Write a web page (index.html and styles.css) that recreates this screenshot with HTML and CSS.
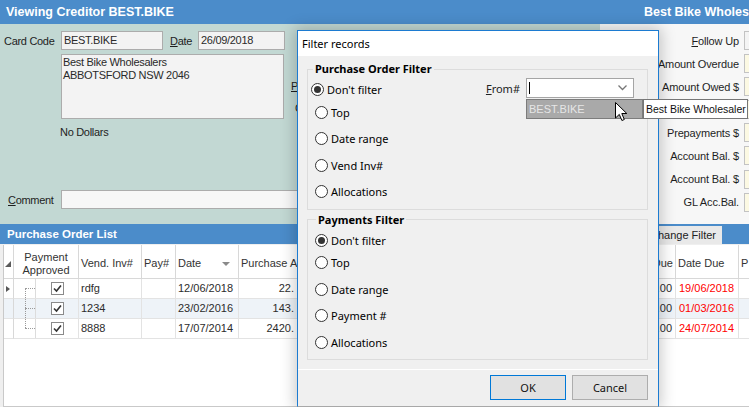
FILE: index.html
```html
<!DOCTYPE html>
<html>
<head>
<meta charset="utf-8">
<title>Viewing Creditor</title>
<link rel="stylesheet" href="styles.css">
</head>
<body>
<div class="app">
  <div class="titlebar">
    <span class="title">Viewing Creditor BEST.BIKE</span>
    <span class="title-right">Best Bike Wholesa</span>
  </div>
  <div class="main">
    <div class="form">
      <div class="row1">
        <span class="lbl lbl-code">Card Code</span>
        <span class="field f-code">BEST.BIKE</span>
        <span class="lbl lbl-date"><u>D</u>ate</span>
        <span class="field f-date">26/09/2018</span>
      </div>
      <div class="row2">
        <div class="address">Best Bike Wholesalers<br>ABBOTSFORD NSW 2046</div>
        <div class="side-labels">
          <span class="side-lbl"><u>P</u>h</span>
          <span class="side-lbl c2">C</span>
        </div>
      </div>
      <div class="currency">No Dollars</div>
      <div class="row-comment">
        <span class="lbl lbl-comment"><u>C</u>omment</span>
        <span class="field f-comment"></span>
      </div>
    </div>
    <div class="summary">
      <div class="srow"><span class="slbl"><u>F</u>ollow Up</span><span class="sfield plain"></span></div>
      <div class="srow"><span class="slbl">Amount Overdue</span><span class="sfield"></span></div>
      <div class="srow"><span class="slbl">Amount Owed $</span><span class="sfield"></span></div>
      <div class="srow"><span class="slbl"></span><span class="sfield"></span></div>
      <div class="srow"><span class="slbl">Prepayments $</span><span class="sfield"></span></div>
      <div class="srow"><span class="slbl">Account Bal. $</span><span class="sfield"></span></div>
      <div class="srow"><span class="slbl">Account Bal. $</span><span class="sfield"></span></div>
      <div class="srow"><span class="slbl">GL Acc.Bal.</span><span class="sfield"></span></div>
    </div>
  </div>
  <div class="listbar">
    <span class="listtitle">Purchase Order List</span>
    <span class="tab">Change Filter</span>
  </div>
  <div class="list">
    <div class="gridwrap">
      <table class="grid">
        <colgroup>
          <col class="c-ind"><col class="c-appr"><col class="c-vend"><col class="c-pay"><col class="c-date">
          <col class="c-purch"><col class="c-h1"><col class="c-h2"><col class="c-h3"><col class="c-due"><col class="c-dd"><col class="c-p">
        </colgroup>
        <thead>
          <tr>
            <th class="ind-h"><span class="corner"></span></th>
            <th class="center">Payment<br>Approved</th>
            <th>Vend. Inv#</th>
            <th>Pay#</th>
            <th><span class="sorthead">Date<span class="sort"></span></span></th>
            <th>Purchase A</th>
            <th></th>
            <th></th>
            <th></th>
            <th class="right">Due</th>
            <th>Date Due</th>
            <th>P</th>
          </tr>
        </thead>
        <tbody>
          <tr>
            <td class="ind"><span class="rowptr"></span></td>
            <td class="appr"><div class="apprbox"><span class="tree"><span class="t-top"></span><span class="t-bot line"></span></span><span class="chkcell"><span class="chk"><svg width="11" height="11" viewBox="0 0 11 11"><polyline points="2,5.5 4.5,8 9,2.5" fill="none" stroke="#333" stroke-width="1.6"/></svg></span></span></div></td>
            <td>rdfg</td>
            <td></td>
            <td>12/06/2018</td>
            <td class="right">22.</td>
            <td></td>
            <td></td>
            <td></td>
            <td class="right">.00</td>
            <td class="red">19/06/2018</td>
            <td></td>
          </tr>
          <tr class="alt">
            <td class="ind"></td>
            <td class="appr"><div class="apprbox"><span class="tree"><span class="t-top line-v"></span><span class="t-bot line"></span></span><span class="chkcell"><span class="chk"><svg width="11" height="11" viewBox="0 0 11 11"><polyline points="2,5.5 4.5,8 9,2.5" fill="none" stroke="#333" stroke-width="1.6"/></svg></span></span></div></td>
            <td>1234</td>
            <td></td>
            <td>23/02/2016</td>
            <td class="right">143.</td>
            <td></td>
            <td></td>
            <td></td>
            <td class="right">.00</td>
            <td class="red">01/03/2016</td>
            <td></td>
          </tr>
          <tr>
            <td class="ind"></td>
            <td class="appr"><div class="apprbox"><span class="tree"><span class="t-top line-v"></span><span class="t-bot line-h"></span></span><span class="chkcell"><span class="chk"><svg width="11" height="11" viewBox="0 0 11 11"><polyline points="2,5.5 4.5,8 9,2.5" fill="none" stroke="#333" stroke-width="1.6"/></svg></span></span></div></td>
            <td>8888</td>
            <td></td>
            <td>17/07/2014</td>
            <td class="right">2420.</td>
            <td></td>
            <td></td>
            <td></td>
            <td class="right">.00</td>
            <td class="red">24/07/2014</td>
            <td></td>
          </tr>
        </tbody>
      </table>
    </div>
  </div>
</div>

<div class="dialog">
  <div class="dlg-title">Filter records</div>
  <div class="dlg-body">
    <fieldset class="group g1">
      <legend>Purchase Order Filter</legend>
      <div class="g-inner">
        <div class="radios">
          <div class="radio first checked"><span class="circle"></span>Don't filter</div>
          <div class="radio"><span class="circle"></span>Top</div>
          <div class="radio"><span class="circle"></span>Date range</div>
          <div class="radio"><span class="circle"></span>Vend Inv#</div>
          <div class="radio"><span class="circle"></span>Allocations</div>
        </div>
        <div class="from">
          <span class="from-lbl"><u>F</u>rom#</span>
          <div class="combo">
            <span class="caret"></span>
            <svg class="chev" width="9" height="6" viewBox="0 0 9 6"><polyline points="0.5,0.5 4.5,4.5 8.5,0.5" fill="none" stroke="#777" stroke-width="1.3"/></svg>
            <div class="droplist">BEST.BIKE</div>
            <div class="tooltip">Best Bike Wholesaler</div>
            <svg class="cursor" width="13" height="20" viewBox="0 0 13 20"><path d="M0.5 0.5 L0.5 16 L4.3 12.4 L6.9 18.5 L9.3 17.5 L6.8 11.5 L11.8 11.5 Z" fill="#fff" stroke="#000" stroke-width="1" stroke-linejoin="miter"/></svg>
          </div>
        </div>
      </div>
    </fieldset>
    <fieldset class="group g2">
      <legend>Payments Filter</legend>
      <div class="g-inner">
        <div class="radios">
          <div class="radio first checked"><span class="circle"></span>Don't filter</div>
          <div class="radio"><span class="circle"></span>Top</div>
          <div class="radio"><span class="circle"></span>Date range</div>
          <div class="radio"><span class="circle"></span>Payment #</div>
          <div class="radio"><span class="circle"></span>Allocations</div>
        </div>
      </div>
    </fieldset>
  </div>
  <div class="dlg-footer">
    <button class="btn ok">OK</button>
    <button class="btn">Cancel</button>
  </div>
</div>
</body>
</html>
```

FILE: styles.css
```css
* { box-sizing: border-box; }
html, body { margin: 0; padding: 0; }
body {
  width: 749px;
  height: 407px;
  overflow: hidden;
  position: relative;
  font-family: "Liberation Sans", Arial, sans-serif;
  font-size: 11px;
  color: #1e1e1e;
  background: #fff;
}
.app { display: flex; flex-direction: column; height: 407px; }

/* title bar */
.titlebar {
  height: 24px;
  flex: none;
  background: #4b8cca;
  color: #fff;
  font-weight: bold;
  font-size: 12.5px;
  display: flex;
  align-items: center;
  justify-content: space-between;
  padding-left: 6px;
}
.title-right { width: 105px; overflow: hidden; white-space: nowrap; }

/* main header area */
.main { height: 200px; flex: none; display: flex; }
.form {
  width: 600px;
  flex: none;
  background: #c2d8d3;
  padding-top: 7px;
  letter-spacing: -0.3px;
  overflow: hidden;
}
.row1 { display: flex; align-items: center; height: 19px; }
.lbl-code { width: 61px; padding-left: 4px; }
.field {
  display: block;
  height: 19px;
  line-height: 17px;
  border: 1px solid #acacac;
  background: #f3f3f3;
  padding: 0 2px;
  color: #2a2a2a;
}
.f-code { width: 102px; }
.lbl-date { width: 28px; margin-left: 7px; }
.f-date { width: 87px; }
.row2 { display: flex; margin-top: 4px; height: 65px; }
.address {
  margin-left: 61px;
  width: 223px;
  height: 65px;
  border: 1px solid #acacac;
  background: #f3f3f3;
  padding: 1px 1px;
  line-height: 13px;
  color: #2a2a2a;
}
.side-labels { margin-left: 7px; padding-top: 26px; display: flex; flex-direction: column; }
.side-lbl { display: block; height: 22px; line-height: 13px; }
.side-lbl.c2 { padding-left: 4px; height: 13px; }
.currency { margin-top: 7px; padding-left: 60px; line-height: 13px; }
.row-comment { display: flex; align-items: center; height: 19px; margin-top: 51px; }
.lbl-comment { width: 61px; padding-left: 8px; }
.f-comment { width: 340px; background: #f7f7f7; }

.summary {
  flex: 1;
  background: #f7f7f7;
  padding-top: 7px;
  display: flex;
  flex-direction: column;
  gap: 4.1px;
  overflow: hidden;
  letter-spacing: -0.15px;
}
.srow { display: flex; align-items: center; height: 19px; flex: none; }
.slbl { width: 139px; flex: none; text-align: right; white-space: nowrap; }
.sfield {
  flex: none;
  width: 30px;
  height: 19px;
  margin-left: 5px;
  border: 1px solid #c3c3c3;
  background: #fcf9e3;
}
.sfield.plain { background: #f4f4f4; }

/* list header bar */
.listbar {
  height: 20px;
  flex: none;
  background: #4b8cca;
  display: flex;
  align-items: flex-end;
  padding-left: 7px;
}
.listtitle {
  align-self: center;
  color: #fff;
  font-weight: bold;
  font-size: 11.5px;
}
.tab {
  margin-left: auto;
  margin-right: 27px;
  width: 76px;
  height: 18px;
  line-height: 18px;
  padding-left: 4px;
  background: #e9e9e9;
  color: #222;
  white-space: nowrap;
}

/* grid */
.list {
  flex: 1;
  background: #efefef;
  padding: 1px 0 0 3px;
  display: flex;
}
.gridwrap {
  flex: 1;
  background: #fff;
  border-left: 1px solid #c9c9c9;
  border-bottom: 1px solid #c9c9c9;
  overflow: hidden;
}
.grid {
  table-layout: fixed;
  width: 795px;
  border-collapse: separate;
  border-spacing: 0;
  color: #2c2c2c;
}
.c-ind { width: 10px; }
.c-appr { width: 65px; }
.c-vend { width: 63px; }
.c-pay { width: 34px; }
.c-date { width: 63px; }
.c-purch { width: 59px; }
.c-h1 { width: 104px; }
.c-h2 { width: 90px; }
.c-h3 { width: 100px; }
.c-due { width: 84px; }
.c-dd { width: 63px; }
.c-p { width: 60px; }
.grid th {
  height: 34px;
  padding: 4px 2px 0 2px;
  font-weight: normal;
  text-align: left;
  vertical-align: middle;
  line-height: 13px;
  border-right: 1px solid #d8d8d8;
  border-bottom: 1px solid #d8d8d8;
  white-space: nowrap;
  overflow: hidden;
  color: #333;
}
.grid th.center { text-align: center; }
.grid th.right { text-align: right; }
.grid th.ind-h { padding: 4px 0 0 0; text-align: right; }
.corner {
  display: inline-block;
  width: 0;
  height: 0;
  border-left: 6px solid transparent;
  border-bottom: 6px solid #5a5a5a;
  margin-right: 2px;
}
.sorthead { display: flex; align-items: center; justify-content: space-between; padding-right: 6px; }
.sort {
  width: 0;
  height: 0;
  border-left: 4px solid transparent;
  border-right: 4px solid transparent;
  border-top: 4px solid #8a8a8a;
}
.grid td {
  height: 20px;
  padding: 0 3px 0 2px;
  border-right: 1px solid #e3e3e3;
  border-bottom: 1px solid #e3e3e3;
  white-space: nowrap;
  overflow: hidden;
  line-height: 19px;
}
.grid tr.alt td { background: #eef3f8; }
.grid td.right { text-align: right; }
.grid td.red { color: #ff0000; padding-left: 3px; }
.grid td.ind { padding: 0 0 0 2px; border-right-color: #d8d8d8; }
.rowptr {
  display: block;
  width: 0;
  height: 0;
  border-top: 3.5px solid transparent;
  border-bottom: 3.5px solid transparent;
  border-left: 4px solid #555;
}
.grid td.appr { padding: 0; }
.apprbox { display: flex; height: 19px; }
.tree {
  width: 22px;
  flex: none;
  padding-left: 11px;
  border-right: 1px solid #dcdcdc;
  display: flex;
  flex-direction: column;
}
.t-top { height: 9px; display: block; }
.t-bot { flex: 1; display: block; }
.line-v { border-left: 1px dotted #9a9a9a; }
.line { border-left: 1px dotted #9a9a9a; border-top: 1px dotted #9a9a9a; }
.line-h { border-top: 1px dotted #9a9a9a; }
.chkcell { flex: 1; display: flex; align-items: center; justify-content: center; }
.chk {
  width: 13px;
  height: 13px;
  border: 1px solid #8a8a8a;
  background: #fff;
  display: flex;
  align-items: center;
  justify-content: center;
}

/* dialog */
.dialog {
  position: absolute;
  left: 297px;
  top: 30px;
  width: 362px;
  height: 377px;
  background: #f0f0f0;
  border: 1px solid #1c7bd1;
  border-bottom-color: #a8a8a8;
  box-shadow: 0 0 14px 2px rgba(0, 0, 0, 0.22);
  font-family: "Noto Sans", "Liberation Sans", sans-serif;
  font-size: 11px;
  color: #000;
  display: flex;
  flex-direction: column;
  z-index: 5;
}
.dlg-title {
  height: 25px;
  flex: none;
  background: #fff;
  padding-left: 4px;
  line-height: 25px;
}
.dlg-body { height: 313px; flex: none; padding-top: 5px; }
.group {
  margin: 0 10px 0 9px;
  border: 1px solid #dcdcdc;
  padding: 0 0 7px 0;
  min-width: 0;
}
.group legend {
  font-weight: bold;
  padding: 0 2px;
  margin-left: 5px;
  line-height: 16px;
}
.g2 { margin-top: 2px; padding-bottom: 6px; }
.g2 legend { margin-left: 8px; }
.g-inner { display: flex; padding: 2px 13px 0 0; }
.g2 .g-inner { padding-top: 3px; }
.radios { display: flex; flex-direction: column; gap: 6.6px; }
.radio {
  display: flex;
  align-items: center;
  gap: 3px;
  height: 20px;
  padding-left: 7px;
}
.g1 .radio.first { padding-left: 3px; margin-bottom: -3.6px; }
.g2 .radio.first { margin-bottom: -4.6px; }
.circle {
  width: 13px;
  height: 13px;
  border: 1px solid #333;
  border-radius: 50%;
  background: #fff;
  display: flex;
  align-items: center;
  justify-content: center;
}
.checked .circle::after {
  content: "";
  width: 7px;
  height: 7px;
  border-radius: 50%;
  background: #333;
}
.from {
  margin-left: auto;
  margin-top: -1px;
  display: flex;
  align-items: center;
  height: 20px;
}
.from-lbl { margin-right: 6px; color: #222; }
.combo {
  position: relative;
  width: 108px;
  height: 20px;
  border: 1px solid #a5a5a5;
  background: #fff;
  display: flex;
  align-items: center;
}
.caret { width: 1px; height: 12px; background: #000; margin-left: 2px; }
.chev { margin-left: auto; margin-right: 6px; }
.droplist {
  position: absolute;
  left: -1px;
  top: 20px;
  width: 117px;
  height: 20px;
  background: #a9a9a9;
  border: 1px solid #7c7c7c;
  color: #e6e6e6;
  line-height: 18px;
  padding-left: 2px;
  font-family: "Liberation Sans", Arial, sans-serif;
  font-size: 11px;
}
.tooltip {
  position: absolute;
  left: 116px;
  top: 20px;
  width: 105px;
  height: 20px;
  background: #fff;
  border: 1px solid #767676;
  line-height: 18px;
  padding-left: 2px;
  font-family: "Liberation Sans", Arial, sans-serif;
  font-size: 10.5px;
  color: #111;
  white-space: nowrap;
  z-index: 6;
}
.cursor { position: absolute; left: 88px; top: 23px; z-index: 7; }
.dlg-footer {
  flex: 1;
  border-top: 1px solid #fff;
  display: flex;
  justify-content: flex-end;
  align-items: flex-start;
  gap: 6px;
  padding: 5px 10px 0 0;
}
.btn {
  width: 76px;
  height: 25px;
  margin: 0;
  background: #e1e1e1;
  border: 1px solid #adadad;
  font-family: "Noto Sans", "Liberation Sans", sans-serif;
  font-size: 11px;
  color: #111;
  padding: 0;
}
.btn.ok { border-color: #0078d7; }
```
